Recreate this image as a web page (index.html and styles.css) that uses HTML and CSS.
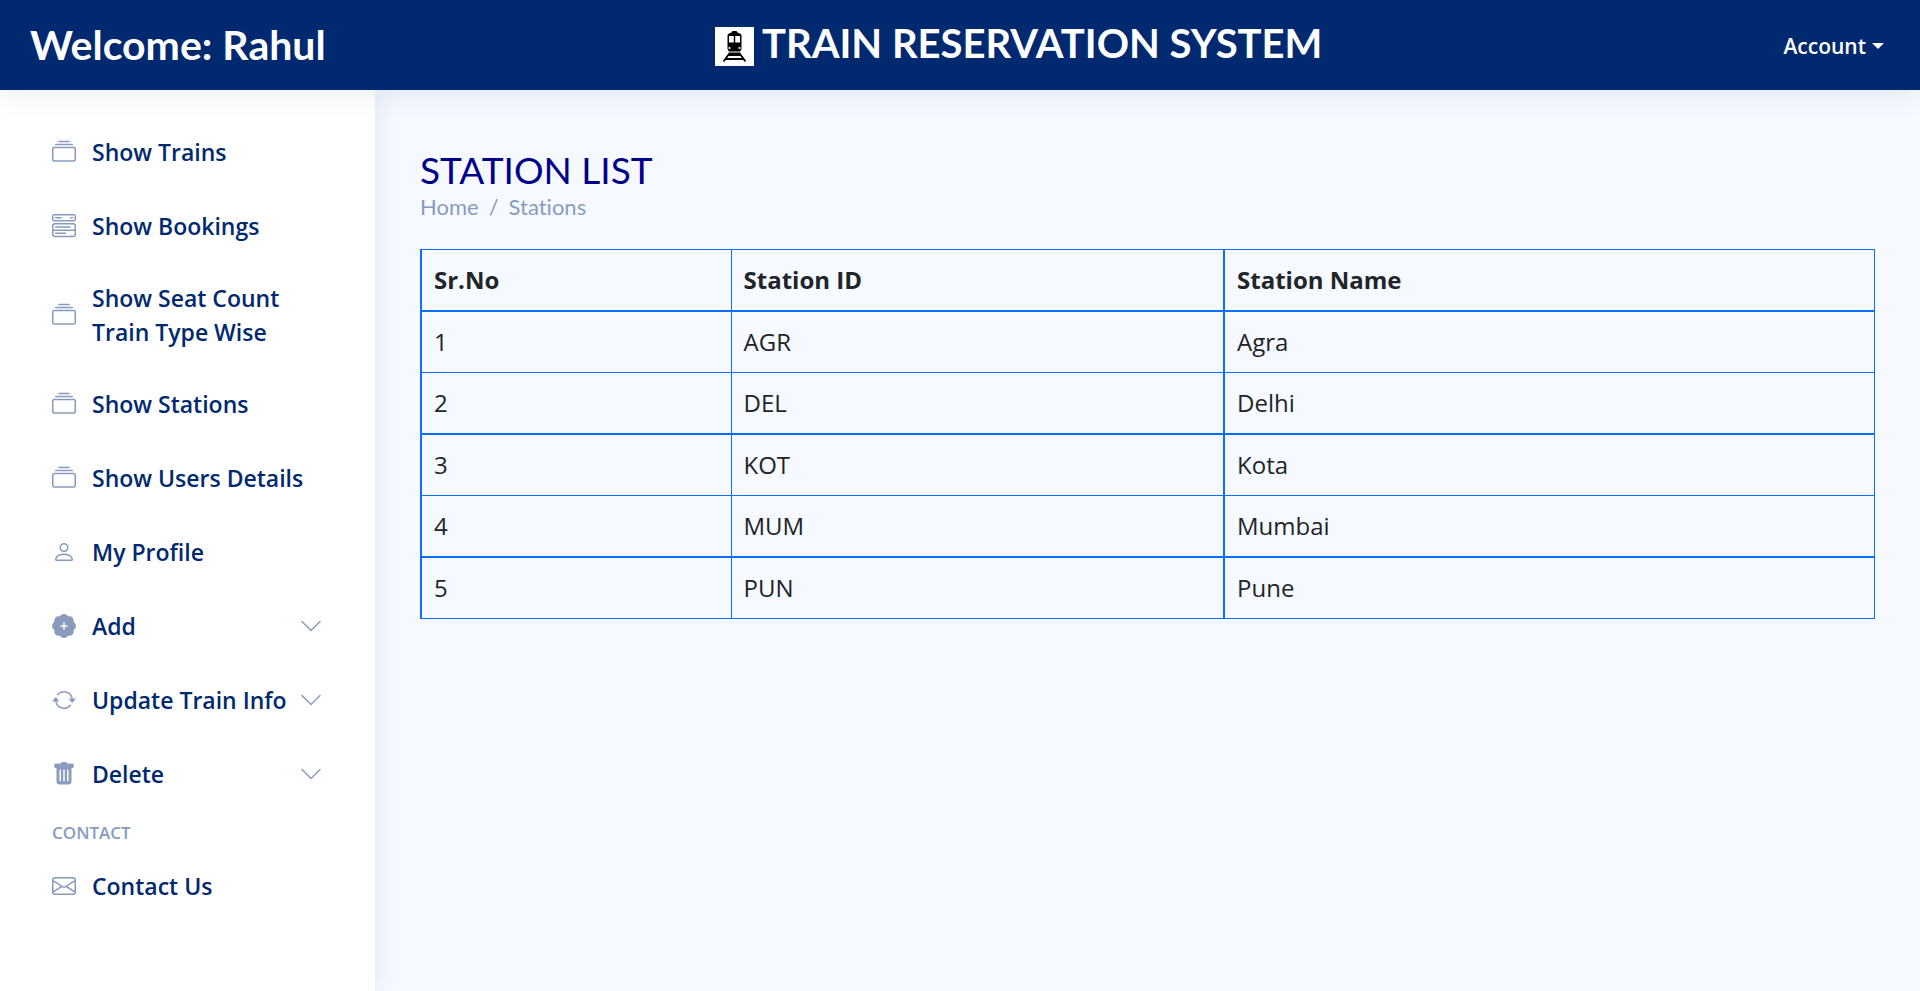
FILE: index.html
```html
<!DOCTYPE html>
<html lang="en">
<head>
<meta charset="utf-8">
<title>Train Reservation System</title>
<link rel="stylesheet" href="styles.css">
</head>
<body>
<svg class="sprite" aria-hidden="true">
  <symbol id="collection" viewBox="0 0 16 16"><path d="M2.5 3.5a.5.5 0 0 1 0-1h11a.5.5 0 0 1 0 1h-11zm2-2a.5.5 0 0 1 0-1h7a.5.5 0 0 1 0 1h-7zM0 13a1.5 1.5 0 0 0 1.500 1.500h13A1.500 1.500 0 0 0 16 13V6a1.500 1.500 0 0 0-1.500-1.500h-13A1.500 1.500 0 0 0 0 6v7zm1.500.5A.5.5 0 0 1 1 13V6a.5.5 0 0 1 .5-.5h13a.5.5 0 0 1 .5.5v7a.5.5 0 0 1-.5.5h-13z"/></symbol>
  <symbol id="stack" viewBox="0 0 16 16"><g fill="none" stroke="currentColor" stroke-width="1"><rect x=".5" y=".5" width="15" height="4" rx="1"/><rect x=".5" y="6.500" width="15" height="8.500" rx="1.500"/><path d="M.5 10.800h15M2.500 2.500h3.500M12.500 2.500h1M2.500 8.700h9.500M2.500 12.900h6.500" stroke-linecap="round"/></g></symbol>
  <symbol id="person" viewBox="0 0 16 16"><path d="M8 8a3 3 0 1 0 0-6 3 3 0 0 0 0 6zm2-3a2 2 0 1 1-4 0 2 2 0 0 1 4 0zm4 8c0 1-1 1-1 1H3s-1 0-1-1 1-4 6-4 6 3 6 4zm-1-.004c-.001-.246-.154-.986-.832-1.664C11.516 10.680 10.289 10 8 10c-2.290 0-3.516.680-4.168 1.332-.678.678-.830 1.418-.832 1.664h10z"/></symbol>
  <symbol id="plus-badge" viewBox="0 0 16 16"><path d="M10.067.87a2.890 2.890 0 0 0-4.134 0l-.622.638-.890-.011a2.890 2.890 0 0 0-2.924 2.924l.010.890-.636.622a2.890 2.890 0 0 0 0 4.134l.637.622-.011.890a2.890 2.890 0 0 0 2.924 2.924l.890-.010.622.636a2.890 2.890 0 0 0 4.134 0l.622-.637.890.011a2.890 2.890 0 0 0 2.924-2.924l-.010-.890.636-.622a2.890 2.890 0 0 0 0-4.134l-.637-.622.011-.890a2.890 2.890 0 0 0-2.924-2.924l-.890.010-.622-.636zM8.500 6v1.500H10a.5.5 0 0 1 0 1H8.500V10a.5.5 0 0 1-1 0V8.500H6a.5.5 0 0 1 0-1h1.500V6a.5.5 0 0 1 1 0z"/></symbol>
  <symbol id="repeat" viewBox="0 0 16 16"><path d="M11.534 7h3.932a.25.25 0 0 1 .192.410l-1.966 2.360a.25.25 0 0 1-.384 0l-1.966-2.360a.25.25 0 0 1 .192-.410zm-11 2h3.932a.25.25 0 0 0 .192-.410L2.692 6.230a.25.25 0 0 0-.384 0L.342 8.590A.25.25 0 0 0 .534 9z"/><path d="M8 3c-1.552 0-2.940.707-3.857 1.818a.5.5 0 1 1-.771-.636A6.002 6.002 0 0 1 13.917 7H12.900A5.002 5.002 0 0 0 8 3zM3.100 9a5.002 5.002 0 0 0 8.757 2.182.5.5 0 1 1 .771.636A6.002 6.002 0 0 1 2.083 9H3.100z"/></symbol>
  <symbol id="trash" viewBox="0 0 16 16"><path d="M2.500 1a1 1 0 0 0-1 1v1a1 1 0 0 0 1 1H3v9a2 2 0 0 0 2 2h6a2 2 0 0 0 2-2V4h.5a1 1 0 0 0 1-1V2a1 1 0 0 0-1-1H10a1 1 0 0 0-1-1H7a1 1 0 0 0-1 1H2.500zm3 4a.5.5 0 0 1 .5.5v7a.5.5 0 0 1-1 0v-7a.5.5 0 0 1 .5-.5zM8 5a.5.5 0 0 1 .5.5v7a.5.5 0 0 1-1 0v-7A.5.5 0 0 1 8 5zm3 .5v7a.5.5 0 0 1-1 0v-7a.5.5 0 0 1 1 0z"/></symbol>
  <symbol id="envelope" viewBox="0 0 16 16"><path d="M0 4a2 2 0 0 1 2-2h12a2 2 0 0 1 2 2v8a2 2 0 0 1-2 2H2a2 2 0 0 1-2-2V4zm2-1a1 1 0 0 0-1 1v.217l7 4.200 7-4.200V4a1 1 0 0 0-1-1H2zm13 2.383-4.708 2.825L15 11.105V5.383zm-.034 6.876-5.640-3.471L8 9.583l-1.326-.795-5.640 3.470A1 1 0 0 0 2 13h12a1 1 0 0 0 .966-.741zM1 11.105l4.708-2.897L1 5.383v5.722z"/></symbol>
  <symbol id="chevron" viewBox="0 0 16 16"><path d="M1.646 4.646a.5.5 0 0 1 .708 0L8 10.293l5.646-5.647a.5.5 0 0 1 .708.708l-6 6a.5.5 0 0 1-.708 0l-6-6a.5.5 0 0 1 0-.708z"/></symbol>
</svg>

<header class="header">
  <span class="welcome">Welcome: Rahul</span>
  <div class="brand">
    <svg class="logo" viewBox="0 0 39 39" role="img" aria-label="Train">
      <rect width="39" height="39" fill="#fff"/>
      <path fill="#000" d="M17.500 4h4l1 1.500 3 1.200 1 1.300V22l-1.500 2.500H14L12.500 22V8l1-1.300 3-1.200z"/>
      <path fill="#fff" d="M14 9h4.800v6.500H14zM20.200 9H25v6.500h-4.800z"/>
      <circle cx="14.500" cy="21" r="1.200" fill="#ccc"/><circle cx="24.500" cy="21" r="1.200" fill="#ccc"/>
      <path fill="#777" d="M13.500 24.500h12V26h-12z"/><path fill="#000" d="M13.500 26h12v3h-12z"/>
      <path fill="none" stroke="#000" stroke-width="1.800" d="M14 27L8.500 34.500M25 27l5.500 7.500M10.500 32h18"/>
    </svg>
    <h1 class="brand-name">TRAIN RESERVATION SYSTEM</h1>
  </div>
  <button class="account" type="button">Account</button>
</header>

<div class="layout">
  <nav class="sidebar" aria-label="Main">
    <ul class="nav">
      <li><a class="nav-link" href="#"><svg class="icon"><use href="#collection"/></svg><span>Show Trains</span></a></li>
      <li><a class="nav-link" href="#"><svg class="icon"><use href="#stack"/></svg><span>Show Bookings</span></a></li>
      <li><a class="nav-link" href="#"><svg class="icon"><use href="#collection"/></svg><span>Show Seat Count Train Type Wise</span></a></li>
      <li><a class="nav-link" href="#"><svg class="icon"><use href="#collection"/></svg><span>Show Stations</span></a></li>
      <li><a class="nav-link" href="#"><svg class="icon"><use href="#collection"/></svg><span>Show Users Details</span></a></li>
      <li><a class="nav-link" href="#"><svg class="icon"><use href="#person"/></svg><span>My Profile</span></a></li>
      <li><button class="nav-link" type="button"><svg class="icon"><use href="#plus-badge"/></svg><span>Add</span><svg class="chevron"><use href="#chevron"/></svg></button></li>
      <li><button class="nav-link" type="button"><svg class="icon"><use href="#repeat"/></svg><span>Update Train Info</span><svg class="chevron"><use href="#chevron"/></svg></button></li>
      <li><button class="nav-link" type="button"><svg class="icon"><use href="#trash"/></svg><span>Delete</span><svg class="chevron"><use href="#chevron"/></svg></button></li>
      <li class="nav-heading">Contact</li>
      <li><a class="nav-link" href="#"><svg class="icon"><use href="#envelope"/></svg><span>Contact Us</span></a></li>
    </ul>
  </nav>

  <main class="main">
    <h2 class="title">STATION LIST</h2>
    <nav aria-label="Breadcrumb">
      <ol class="breadcrumb">
        <li><a href="#">Home</a></li>
        <li><a href="#">Stations</a></li>
      </ol>
    </nav>
    <table class="stations">
      <colgroup><col class="col-no"><col class="col-id"><col></colgroup>
      <thead><tr><th scope="col">Sr.No</th><th scope="col">Station ID</th><th scope="col">Station Name</th></tr></thead>
      <tbody>
        <tr><td>1</td><td>AGR</td><td>Agra</td></tr>
        <tr><td>2</td><td>DEL</td><td>Delhi</td></tr>
        <tr><td>3</td><td>KOT</td><td>Kota</td></tr>
        <tr><td>4</td><td>MUM</td><td>Mumbai</td></tr>
        <tr><td>5</td><td>PUN</td><td>Pune</td></tr>
      </tbody>
    </table>
  </main>
</div>
</body>
</html>
```
FILE: styles.css
```css
* {
  box-sizing: border-box;
}

body {
  margin: 0;
  min-height: 100vh;
  display: flex;
  flex-direction: column;
  background: #f6f9ff;
  color: #212529;
  font-family: "Open Sans", "Noto Sans", sans-serif;
  font-size: 24px;
  line-height: 36px;
}

a {
  color: inherit;
  text-decoration: none;
}

button {
  border: 0;
  background: none;
  color: inherit;
  font: inherit;
  cursor: pointer;
}

ul,
ol {
  list-style: none;
  margin: 0;
  padding: 0;
}

svg {
  fill: currentColor;
  flex: none;
}

.sprite {
  display: none;
}

.header {
  position: relative;
  z-index: 1;
  display: flex;
  align-items: center;
  height: 90px;
  padding: 0 36px 0 30px;
  background: #012970;
  color: #fff;
  box-shadow: 0 2px 30px rgba(1, 41, 112, 0.1);
}

.welcome,
.brand-name {
  margin: 0;
  font-family: Lato, sans-serif;
  font-size: 41px;
  font-weight: 700;
  line-height: 48px;
}

.brand {
  display: flex;
  gap: 8px;
  margin-left: 21%;
  padding-bottom: 4px;
}

.brand-name {
  font-size: 40px;
}

.logo {
  width: 39px;
  height: 39px;
  margin-top: 8px;
}

.account {
  display: flex;
  align-items: center;
  gap: 6px;
  margin-left: auto;
  padding: 2px 0 0;
  font-size: 21px;
  font-weight: 600;
}

.account::after {
  content: "";
  border: 6px solid transparent;
  border-top-color: #fff;
  border-bottom: 0;
}

.layout {
  flex: 1;
  display: flex;
}

.sidebar {
  flex: none;
  width: 375px;
  padding: 29px 30px;
  background: #fff;
  box-shadow: 0 0 25px rgba(1, 41, 112, 0.1);
}

.nav {
  display: flex;
  flex-direction: column;
  gap: 8px;
}

.nav-link {
  display: flex;
  align-items: center;
  width: 100%;
  min-height: 66px;
  padding: 14px 22px;
  color: #012970;
  font-size: 23px;
  font-weight: 600;
  line-height: 34px;
  text-align: left;
}

.icon {
  width: 24px;
  height: 24px;
  margin-right: 16px;
  color: #899bbd;
}

.chevron {
  width: 24px;
  height: 24px;
  margin-left: auto;
  color: #899bbd;
}

.nav-heading {
  margin-top: 6px;
  padding: 0 22px;
  color: #899bbd;
  font-size: 17px;
  font-weight: 600;
  line-height: 24px;
  text-transform: uppercase;
}

.main {
  flex: 1;
  padding: 59px 45px;
}

.title {
  margin: 0;
  color: #00008b;
  font-family: Lato, sans-serif;
  font-size: 37px;
  font-weight: 400;
  line-height: 42px;
}

.breadcrumb {
  display: flex;
  margin-bottom: 26px;
  color: #899bbd;
  font-family: Lato, sans-serif;
  font-size: 22px;
  font-variant-ligatures: none;
  line-height: 32px;
}

.breadcrumb li + li::before {
  content: "/";
  padding: 0 10px;
}

.stations {
  width: 100%;
  border-collapse: collapse;
  table-layout: fixed;
}

.stations th,
.stations td {
  padding: 12px;
  border: 1px solid #0d6efd;
  text-align: left;
}

.stations th,
.stations tbody tr:nth-child(even) td {
  border-bottom-width: 2px;
}

.stations th:first-child,
.stations td:first-child,
.stations th:last-child,
.stations td:last-child {
  border-left-width: 2px;
}

.col-no {
  width: 310px;
}

.col-id {
  width: 493px;
}
```
